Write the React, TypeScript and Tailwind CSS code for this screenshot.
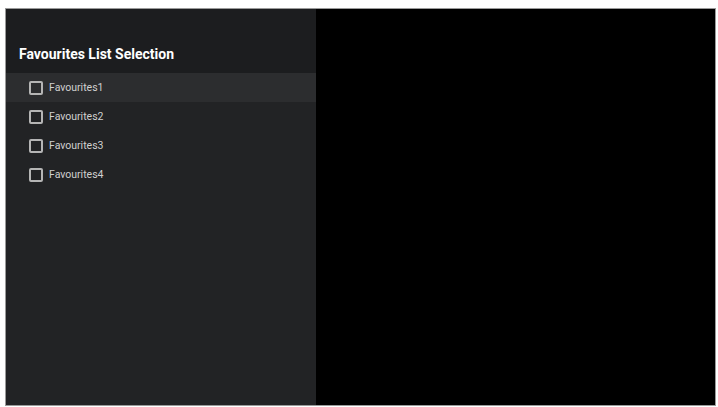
const items = ["Favourites1", "Favourites2", "Favourites3", "Favourites4"];

const App = () => {
  return (
    <div className="w-[718px] h-[407px] bg-white pt-[8px] pl-[5px] pr-[2px] pb-[1px] font-['Roboto',sans-serif]">
      <div className="flex h-full border border-[#9a9a9a] bg-black">
        <div className="w-[310px] flex flex-col bg-[#222325]">
          <div className="h-[64px] bg-[#1c1d1f] flex items-end pl-[13px] pb-[8px]">
            <h1 className="text-white font-bold text-[14px]">Favourites List Selection</h1>
          </div>
          {items.map((item, i) => (
            <div
              key={item}
              className={`h-[29px] flex items-center pl-[23px] gap-[6px] ${i === 0 ? "bg-[#2c2d2f]" : ""}`}
            >
              <div className="w-[14px] h-[14px] border-2 border-[#b5b5b5] rounded-[2px]" />
              <span className="text-[10.5px] text-[#d0d0d0]">{item}</span>
            </div>
          ))}
        </div>
        <div className="flex-1 bg-black" />
      </div>
    </div>
  );
};

export default App;
